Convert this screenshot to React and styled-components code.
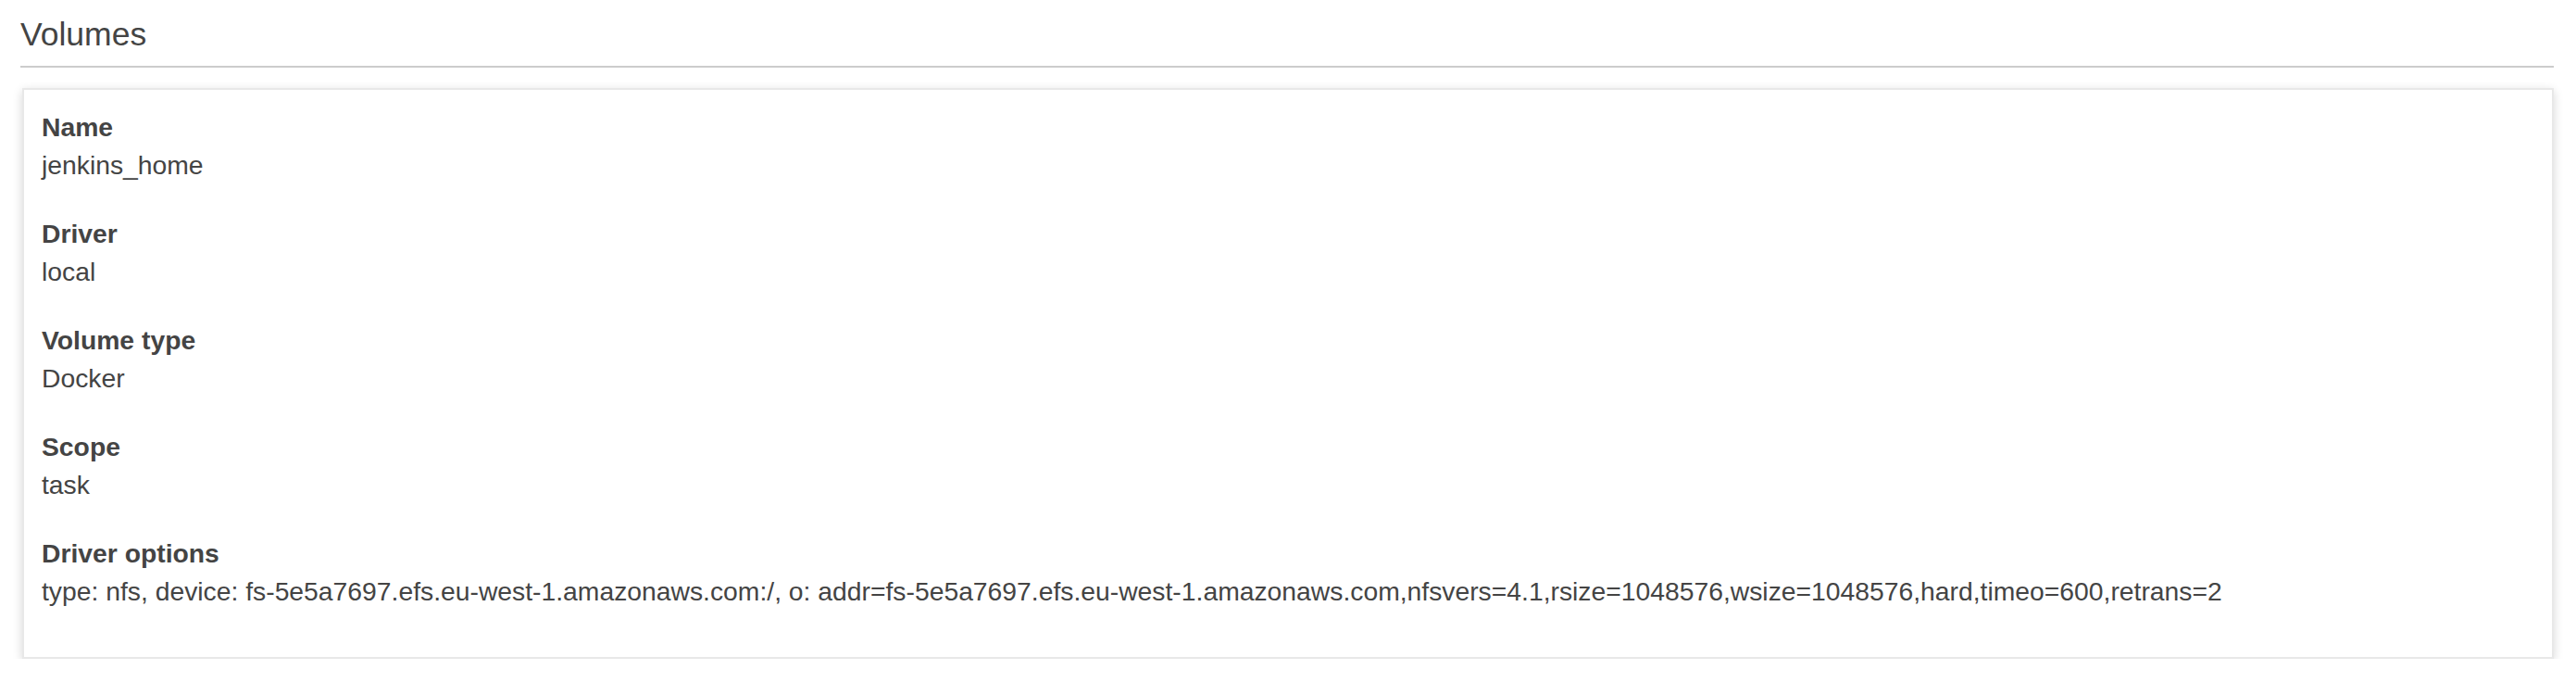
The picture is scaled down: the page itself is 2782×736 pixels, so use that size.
import React from 'react';
import styled, { createGlobalStyle } from 'styled-components';

const GlobalStyle = createGlobalStyle`
	html, body {
		margin: 0;
		padding: 0;
		background: #ffffff;
	}
	body {
		font-family: "Liberation Sans", Arial, Helvetica, sans-serif;
		color: #444444;
	}
`;

const volume = [
	{ label: 'Name', value: 'jenkins_home' },
	{ label: 'Driver', value: 'local' },
	{ label: 'Volume type', value: 'Docker' },
	{ label: 'Scope', value: 'task' },
	{
		label: 'Driver options',
		value: 'type: nfs, device: fs-5e5a7697.efs.eu-west-1.amazonaws.com:/, o: addr=fs-5e5a7697.efs.eu-west-1.amazonaws.com,nfsvers=4.1,rsize=1048576,wsize=1048576,hard,timeo=600,retrans=2',
	},
];

const App = () => (
	<Page>
		<GlobalStyle />
		<SectionTitle>Volumes</SectionTitle>
		<Card>
			{volume.map(({ label, value }) => (
				<Field key={label}>
					<FieldLabel>{label}</FieldLabel>
					<FieldValue>{value}</FieldValue>
				</Field>
			))}
		</Card>
	</Page>
);

const Page = styled.div`
	padding: 0 24px 0 22px;
	width: 2782px;
	box-sizing: border-box;
`;

const SectionTitle = styled.h2`
	margin: 0;
	padding: 15px 0 11px;
	font-size: 35.5px;
	line-height: 45px;
	font-weight: normal;
	color: #444444;
	border-bottom: 2px solid #cccccc;
`;

const Card = styled.section`
	margin: 22px 0 0 2px;
	padding: 20px 19px 50px;
	background: #ffffff;
	border: 2px solid #e8e8e8;
	box-shadow: 0 3px 10px rgba(0, 0, 0, 0.16);
	display: flex;
	flex-direction: column;
	gap: 33px;
`;

const Field = styled.div`
	display: flex;
	flex-direction: column;
	font-size: 28.3px;
	line-height: 41px;
`;

const FieldLabel = styled.div`
	font-weight: bold;
	color: #444444;
`;

const FieldValue = styled.div`
	color: #444444;
`;

export default App;
